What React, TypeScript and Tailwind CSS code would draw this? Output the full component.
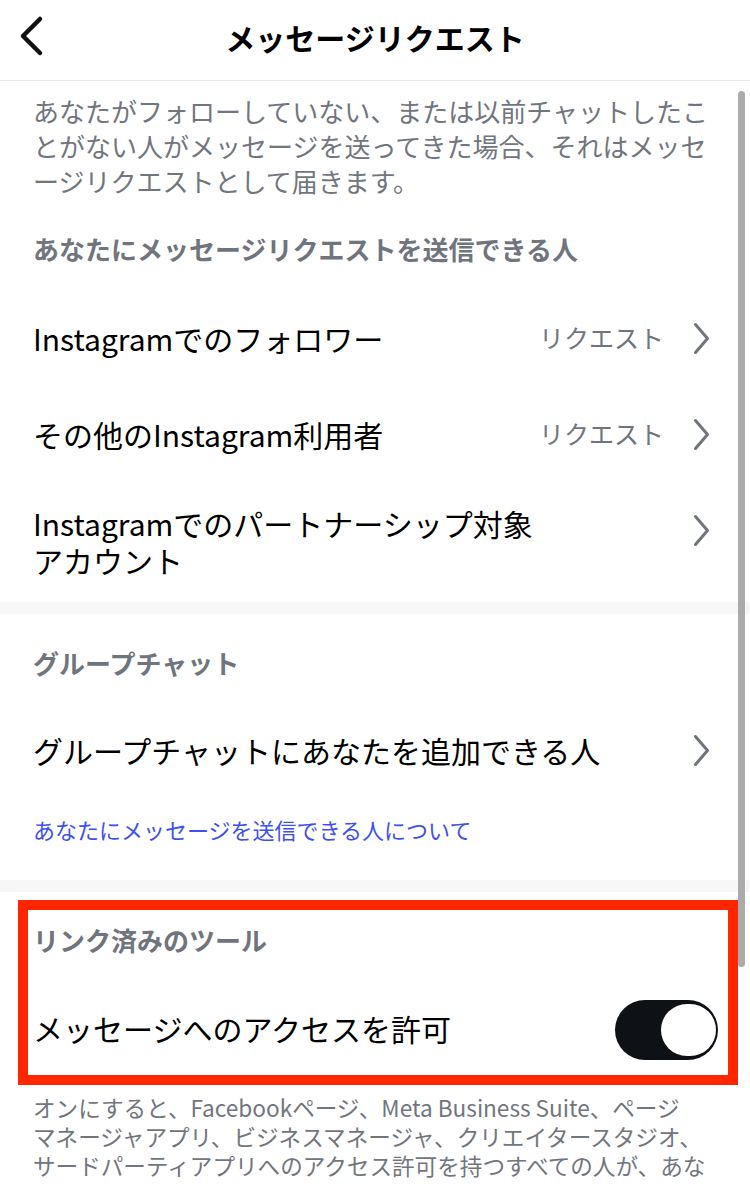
import React from 'react';

const font = { fontFamily: '"Noto Sans CJK JP", "Noto Sans", sans-serif' };

function ChevronRight({ className = '' }: { className?: string }) {
  return (
    <svg width="17" height="33" viewBox="0 0 17 33" fill="none" className={`shrink-0 ${className}`}>
      <path d="M2.5 2.5 L14.5 16.5 L2.5 30.5" stroke="#70757d" strokeWidth="3" strokeLinecap="round" strokeLinejoin="round" />
    </svg>
  );
}

function Row({ children, value, chevronClass }: { children: React.ReactNode; value?: string; chevronClass?: string }) {
  return (
    <div className="flex items-center justify-between min-h-[96px] pl-[33px] pr-[40px] py-[23px]">
      <div className="text-[30px] leading-[37px] text-black">{children}</div>
      <div className="flex items-center gap-[29px]">
        {value && <span className="text-[25px] text-[#70757d]">{value}</span>}
        <ChevronRight className={chevronClass} />
      </div>
    </div>
  );
}

function Heading({ children, className }: { children: React.ReactNode; className: string }) {
  return (
    <div className={`px-[33px] text-[26px] leading-[36px] font-bold text-[#70757d] ${className}`}>{children}</div>
  );
}

export default function App() {
  return (
    <div className="relative w-[750px] h-[1184px] overflow-hidden bg-white" style={font}>
      {/* header */}
      <div className="relative flex items-center justify-center h-[81px] border-b border-[#e9eaec]">
        <svg width="30" height="44" viewBox="0 0 30 44" fill="none" className="absolute left-[15px] top-[14px]">
          <path d="M25 5 L8 22 L25 39" stroke="#111" strokeWidth="4.5" strokeLinecap="round" strokeLinejoin="round" />
        </svg>
        <h1 className="text-[30px] font-bold text-black -mt-[6px]">メッセージリクエスト</h1>
      </div>

      <div className="pt-[12px] px-[33px] text-[26px] leading-[35px] text-[#71767e] whitespace-nowrap">
        あなたがフォローしていない、または以前チャットしたこ
        <br />
        とがない人がメッセージを送ってきた場合、それはメッセ
        <br />
        ージリクエストとして届きます。
      </div>

      <Heading className="pt-[33px] pb-[23px]">あなたにメッセージリクエストを送信できる人</Heading>

      <Row value="リクエスト">Instagramでのフォロワー</Row>
      <Row value="リクエスト">その他のInstagram利用者</Row>
      <Row chevronClass="-mt-[24px]">
        Instagramでのパートナーシップ対象
        <br />
        アカウント
      </Row>

      <div className="h-[12px] bg-[#f7f7f7]" />

      <Heading className="pt-[31px] pb-[21px]">グループチャット</Heading>
      <Row>グループチャットにあなたを追加できる人</Row>
      <div className="px-[33px] pt-[16px] pb-[36px] text-[22px] leading-[30px] text-[#3e4ff0]">
        あなたにメッセージを送信できる人について
      </div>

      <div className="h-[12px] bg-[#f7f7f7]" />

      <div className="relative">
        <Heading className="pt-[30px] pb-[24px]">リンク済みのツール</Heading>
        <div className="flex items-center justify-between h-[96px] pl-[33px] pr-[32px]">
          <span className="text-[30px] leading-[37px] text-black -mt-[4px]">メッセージへのアクセスを許可</span>
          <div className="flex items-center justify-end w-[103px] h-[60px] rounded-full bg-[#0e1116] pr-[2px]">
            <div className="w-[55px] h-[52px] rounded-full bg-white" />
          </div>
        </div>
        {/* annotation frame */}
        <div className="pointer-events-none absolute left-[18px] right-[12px] top-[8px] h-[185px] border-[10px] border-[#ff2600]" />
      </div>

      <div className="px-[33px] pt-[15px] text-[22.6px] leading-[29px] text-[#71767e] whitespace-nowrap">
        オンにすると、Facebookページ、Meta Business Suite、ページ
        <br />
        マネージャアプリ、ビジネスマネージャ、クリエイタースタジオ、
        <br />
        サードパーティアプリへのアクセス許可を持つすべての人が、あな
      </div>

      {/* scrollbar */}
      <div className="absolute left-[738px] top-[91px] w-[7px] h-[876px] rounded-full bg-[#ababab]" />
    </div>
  );
}
